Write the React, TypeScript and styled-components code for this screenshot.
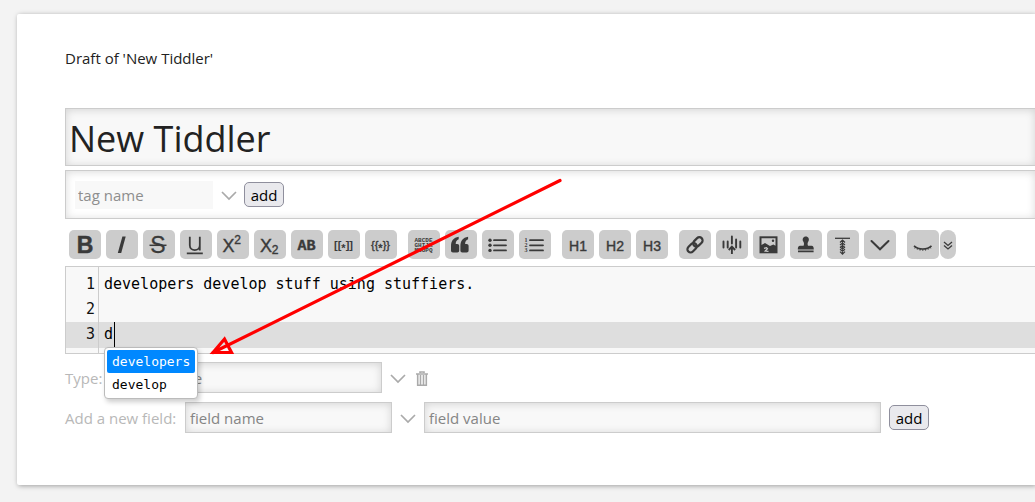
import React from "react";
import styled, { createGlobalStyle } from "styled-components";

const GlobalStyle = createGlobalStyle`
  *, *::before, *::after { box-sizing: border-box; }
  html { height: 100%; }
  body {
    margin: 0;
    min-height: 100%;
    background: #f3f3f3;
    color: #222;
    font: 15px/24px "Open Sans", "Noto Sans", sans-serif;
    overflow-x: hidden;
  }
  button, input, textarea { font: inherit; margin: 0; }
`;

const Page = styled.main`
  padding: 14px 0 16px 17px;
`;

const Card = styled.article`
  position: relative;
  padding: 32px 0 52px 48px;
  background: #fff;
  border-radius: 2px 0 0 2px;
  box-shadow: 1px 1px 5px rgba(0, 0, 0, 0.35);
`;

const DraftTitle = styled.p`
  margin: 0 0 38px;
`;

const insetBox = `
  border: 1px solid #ccc;
  box-shadow: inset 0 1px 8px rgba(0, 0, 0, 0.15);
`;

const TitleInput = styled.input`
  ${insetBox}
  display: block;
  width: 100%;
  height: 58px;
  padding: 2px 4px 0 3px;
  border-right: 0;
  border-radius: 0;
  background: #f8f8f8;
  color: #222;
  font-size: 36px;
  outline: 0;
`;

const TagBox = styled.div`
  ${insetBox}
  display: flex;
  align-items: center;
  height: 49px;
  margin: 4px 0 11px;
  padding-left: 9px;
  border-right: 0;
`;

const TagInput = styled.input`
  width: 138px;
  height: 28px;
  padding: 1px 3px 0;
  border: 0;
  background: #f8f8f8;
  outline: 0;
  &::placeholder { color: #8e8e8e; opacity: 1; }
`;

const FieldInput = styled.input<{ $width: number }>`
  ${insetBox}
  flex: 0 1 ${(p) => p.$width}px;
  min-width: 0;
  height: 31px;
  padding: 0 4px;
  border-radius: 0;
  background: #f8f8f8;
  outline: 0;
  &::placeholder { color: #858585; opacity: 1; }
`;

const AddButton = styled.button`
  width: 40px;
  height: 25px;
  padding: 0;
  border: 1px solid #8f8f9d;
  border-radius: 5px;
  background: #e9e9ed;
  color: #000;
  line-height: 22px;
`;

const IconButton = styled.button<{ $width: number }>`
  display: flex;
  align-items: center;
  justify-content: center;
  width: ${(p) => p.$width}px;
  height: 31px;
  padding: 2px 0 0;
  border: 0;
  background: none;
  color: #aaa;
`;

const Toolbar = styled.div`
  display: flex;
  gap: 11px;
  padding-left: 4px;
`;

const ToolGroup = styled.div<{ $tight?: boolean }>`
  display: flex;
  gap: ${(p) => (p.$tight ? 1 : 5)}px;
`;

const ToolButton = styled.button<{ $narrow?: boolean }>`
  width: ${(p) => (p.$narrow ? 16 : 32)}px;
  height: 29px;
  padding: 0;
  border: 0;
  border-radius: ${(p) => (p.$narrow ? 8 : 5)}px;
  background: #ccc;
  color: #3a3a3a;
  svg { display: block; }
`;

const Editor = styled.div`
  position: relative;
  display: flex;
  margin: 7px 0 8px;
  border: 1px solid #ccc;
  border-right: 0;
  background: linear-gradient(#dedede, #dedede) 0 55px / 100% 26px no-repeat #f8f8f8;
  color: #000;
  font: 15px/25px "DejaVu Sans Mono", monospace;
`;

const Gutter = styled.div`
  width: 33px;
  padding: 5px 3px 5px 0;
  border-right: 1px solid #ccc;
  text-align: right;
  color: #111;
`;

const EditorText = styled.textarea`
  flex: 1;
  height: 86px;
  padding: 5px;
  border: 0;
  background: none;
  color: inherit;
  outline: 0;
  resize: none;
  overflow: hidden;
`;

const Caret = styled.span`
  position: absolute;
  left: 48px;
  top: 55px;
  width: 1px;
  height: 26px;
  background: #000;
`;

const Completions = styled.ul`
  position: absolute;
  z-index: 1;
  left: 38px;
  top: 80px;
  margin: 0;
  padding: 2px;
  list-style: none;
  border: 1px solid #bbb;
  border-radius: 4px;
  background: #fff;
  box-shadow: 2px 3px 5px rgba(0, 0, 0, 0.2);
  font-size: 13px;
  line-height: 23px;
`;

const Completion = styled.li<{ $active?: boolean }>`
  padding: 0 5px;
  border-radius: 2px;
  background: ${(p) => (p.$active ? "#08f" : "transparent")};
  color: ${(p) => (p.$active ? "#fff" : "#000")};
`;

const Fields = styled.div`
  display: grid;
  gap: 9px;
`;

const FieldRow = styled.div`
  display: flex;
  align-items: center;
`;

const FieldLabel = styled.label<{ $width: number }>`
  flex: none;
  width: ${(p) => p.$width}px;
  color: #b8b8b8;
`;

const FieldAction = styled.div`
  padding-left: 8px;
  line-height: 0;
`;

const Pointer = styled.svg`
  position: absolute;
  z-index: 2;
  left: 190px;
  top: 160px;
  pointer-events: none;
`;

const sans = "Liberation Sans, sans-serif";

const Glyph = ({ x, y, size, weight = 400, family = sans, children }: {
  x: number; y: number; size: number; weight?: number; family?: string; children: React.ReactNode;
}) => (
  <text x={x} y={y} fontSize={size} fontWeight={weight} fontFamily={family} textAnchor="middle" fill="currentColor">
    {children}
  </text>
);

const Icon = ({ width = 32, children }: { width?: number; children: React.ReactNode }) => (
  <svg width={width} height={29} viewBox={`0 0 ${width} 29`} fill="none" stroke="none" aria-hidden="true">
    {children}
  </svg>
);

const Bracketed = ({ open, close, weight }: { open: string; close: string; weight: number }) => (
  <Glyph x={15.5} y={19} size={11} weight={weight}>
    {open}<tspan dy="2.5">*</tspan><tspan dy="-2.5">{close}</tspan>
  </Glyph>
);

const Heading = ({ level }: { level: number }) => (
  <g stroke="currentColor" strokeWidth=".4"><Glyph x={16} y={21} size={14}>{`H${level}`}</Glyph></g>
);

const Rows = ({ from }: { from: number }) => (
  <path d={`M${from} 10.2H24M${from} 15.3H24M${from} 20.4H24`} stroke="currentColor" strokeWidth="1.8" strokeLinecap="round" />
);

const groups: { name: string; icon: React.ReactNode }[][] = [
  [
    { name: "Bold", icon: <g stroke="currentColor" strokeWidth=".5"><Glyph x={16} y={23} size={23} weight={700}>B</Glyph></g> },
    { name: "Italic", icon: <path d="M16.4 6.5h3.3L15.2 23h-3.400z" fill="currentColor" /> },
    { name: "Strikethrough", icon: <><g stroke="currentColor" strokeWidth=".3"><Glyph x={15} y={23} size={23}>S</Glyph></g><path d="M6.5 15.3H23.5" stroke="currentColor" strokeWidth="1.5" /></> },
    { name: "Underline", icon: <path d="M9.8 6.8v8.400c0 6.500 10 6.500 10 0V6.800M19.800 15v5.500M6.800 23.300H22.800" stroke="currentColor" strokeWidth="1.8" /> },
    { name: "Superscript", icon: <g stroke="currentColor" strokeWidth=".4"><Glyph x={11.5} y={22} size={18}>X</Glyph><Glyph x={20.5} y={14} size={12}>2</Glyph></g> },
    { name: "Subscript", icon: <g stroke="currentColor" strokeWidth=".4"><Glyph x={12} y={22} size={18}>X</Glyph><Glyph x={21} y={24} size={12}>2</Glyph></g> },
    { name: "Monospaced line", icon: <g stroke="currentColor" strokeWidth=".4"><Glyph x={15.5} y={20} size={15} weight={700} family="Liberation Mono, monospace">AB</Glyph></g> },
    { name: "Link to tiddler", icon: <Bracketed open="[[" close="]]" weight={700} /> },
    { name: "Transclude tiddler", icon: <g stroke="currentColor" strokeWidth=".4"><Bracketed open="{{" close="}}" weight={400} /></g> },
  ],
  [
    { name: "Monospaced block", icon: <>{["ABCDE", "GHIJK", "MNOPQ"].map((row, i) => (
      <Glyph key={row} x={15.5} y={12 + i * 5} size={6} weight={700} family="Liberation Mono, monospace">{row}</Glyph>))}</> },
    { name: "Quote", icon: <path d="M13.700 6.800v2.400c-2 .8-3 2.300-3 4.800h1.500c1.300 0 2 .7 2 2v4.500c0 1.300-.7 2-2 2H8c-1.300 0-2-.7-2-2V16C6 11 8.500 7.500 13.700 6.800zM23.100 6.800v2.400c-2 .8-3 2.300-3 4.800h1.500c1.300 0 2 .7 2 2v4.500c0 1.300-.7 2-2 2h-4.200c-1.300 0-2-.7-2-2V16c0-5 2.500-8.500 7.700-9.200z" fill="currentColor" /> },
    { name: "Bulleted list", icon: <><g fill="currentColor"><circle cx="8" cy="10.2" r="1.7" /><circle cx="8" cy="15.3" r="1.7" /><circle cx="8" cy="20.4" r="1.7" /></g><Rows from={12} /></> },
    { name: "Numbered list", icon: <>{["1", "2", "3"].map((n, i) => <Glyph key={n} x={7} y={12 + i * 5} size={6} weight={700} family="Liberation Serif, serif">{n}</Glyph>)}<Rows from={11} /></> },
  ],
  [1, 2, 3].map((n) => ({ name: `Heading ${n}`, icon: <Heading level={n} /> })),
  [
    { name: "Link", icon: <g stroke="currentColor" strokeWidth="2.2"><rect x="-5.3" y="-3.2" width="10.6" height="6.4" rx="3.2" transform="translate(18.9 11.9) rotate(-45)" /><rect x="-5.3" y="-3.2" width="10.6" height="6.4" rx="3.2" transform="translate(13.1 17.7) rotate(-45)" /></g> },
    { name: "Excise", icon: <><path d="M7.5 11.500v6M11.700 11.500v6M15.900 6.500v7M20.100 9.500v8M24.300 11.500v6" stroke="currentColor" strokeWidth="1.9" strokeLinecap="round" /><path d="M15.9 24v-7M12.700 20l3.200-3.300 3.200 3.300" stroke="currentColor" strokeWidth="1.9" /></> },
    { name: "Picture", icon: <><path d="M6.5 6.300h18v17h-18z" fill="currentColor" /><path d="M8.500 8.300h14v7.500l-2.200-1.400-3.300 1.600-5-3-3.500 2z" fill="#ccc" /><circle cx="20" cy="10.7" r="1.2" fill="currentColor" /><path d="M11 18.300l2.500-.7 1 1.200-2.300 2.200 3.300.3" stroke="#ccc" strokeWidth="1.2" /></> },
    { name: "Stamp", icon: <path d="M13.600 15.800c.7-2 .5-3-.3-4.300-1.500-2.500 0-5.100 2.500-5.100s4 2.600 2.500 5.100c-.8 1.300-1 2.300-.3 4.300h3.600c1.500 0 2.200 1.200 2.200 3.700H7.800c0-2.500.7-3.700 2.200-3.700zM8 20.600h15.600v1.700H8z" fill="currentColor" /> },
    { name: "Editor height", icon: <><path d="M8 8.300h15" stroke="currentColor" strokeWidth="1.3" /><path d="M15.500 10v14M13 12.500l2.500-2.500 2.500 2.500M13 15l2.500-2 2.500 2M13 17.500l2.500-2 2.500 2M13 17l2.500 2 2.500-2M13 19.300l2.500 2 2.500-2M13 21.700l2.500 2.500 2.500-2.500" stroke="currentColor" strokeWidth="1.2" /></> },
    { name: "More", icon: <path d="M7.500 11l8.500 8.300L24.500 11" stroke="currentColor" strokeWidth="2" strokeLinecap="round" /> },
  ],
];

const Chevron = () => (
  <svg width="16" height="10" viewBox="0 0 16 10" fill="none" aria-hidden="true">
    <path d="M1 1l7 7 7-7" stroke="currentColor" strokeWidth="1.7" />
  </svg>
);

const Bin = () => (
  <svg width="12" height="16" viewBox="0 0 12 16" fill="none" aria-hidden="true">
    <path d="M4 2V1h4v1M0 3h12M1.700 3v11.300h8.600V3M4.500 4v10M7.500 4v10" stroke="currentColor" strokeWidth="1.6" />
  </svg>
);

export default function App() {
  return (
    <Page>
      <GlobalStyle />
      <Card>
        <DraftTitle>Draft of 'New Tiddler'</DraftTitle>
        <TitleInput aria-label="Title" defaultValue="New Tiddler" />
        <TagBox>
          <TagInput aria-label="Tag name" placeholder="tag name" />
          <IconButton $width={31} aria-label="Show tags"><Chevron /></IconButton>
          <AddButton>add</AddButton>
        </TagBox>
        <Toolbar role="toolbar" aria-label="Formatting">
          {groups.map((group, i) => (
            <ToolGroup key={i}>
              {group.map((tool) => (
                <ToolButton key={tool.name} aria-label={tool.name}><Icon>{tool.icon}</Icon></ToolButton>
              ))}
            </ToolGroup>
          ))}
          <ToolGroup $tight>
            <ToolButton aria-label="Preview">
              <Icon>
                <path d="M7 15.800c4.500 4.300 13 4.300 17.500 0" stroke="currentColor" strokeWidth="1.6" />
                <path d="M8.500 17l-.8 1.500M10.800 18.200l-.6 1.600M13.300 19l-.3 1.700M15.800 19v2M18.300 19l.3 1.700M20.700 18.200l.6 1.600M23 17l.8 1.500" stroke="currentColor" strokeWidth=".8" />
              </Icon>
            </ToolButton>
            <ToolButton $narrow aria-label="Preview type">
              <Icon width={16}>
                <path d="M4 12l4 3.500 4-3.500M4 15.500l4 3.500 4-3.500" stroke="currentColor" strokeWidth="1.3" />
              </Icon>
            </ToolButton>
          </ToolGroup>
        </Toolbar>
        <Editor>
          <Gutter aria-hidden="true">
            <div>1</div>
            <div>2</div>
            <div>3</div>
          </Gutter>
          <EditorText aria-label="Text" spellCheck={false} defaultValue={"developers develop stuff using stuffiers.\n\nd"} />
          <Caret />
          <Completions role="listbox" aria-label="Completions">
            <Completion role="option" aria-selected $active>developers</Completion>
            <Completion role="option" aria-selected={false}>develop</Completion>
          </Completions>
        </Editor>
        <Fields>
          <FieldRow>
            <FieldLabel $width={44} htmlFor="type">Type:</FieldLabel>
            <FieldInput $width={273} id="type" placeholder="content type" />
            <IconButton $width={32} aria-label="Show types"><Chevron /></IconButton>
            <IconButton $width={16} aria-label="Delete type"><Bin /></IconButton>
          </FieldRow>
          <FieldRow>
            <FieldLabel $width={120} htmlFor="field-name">Add a new field:</FieldLabel>
            <FieldInput $width={207} id="field-name" placeholder="field name" />
            <IconButton $width={32} aria-label="Show fields"><Chevron /></IconButton>
            <FieldInput $width={457} aria-label="Field value" placeholder="field value" />
            <FieldAction><AddButton>add</AddButton></FieldAction>
          </FieldRow>
        </Fields>
        <Pointer width="360" height="190" viewBox="207 174 360 190" fill="none" aria-hidden="true">
          <path d="M560 180.500L213 352.500M213 352.500L224.500 339L231.500 352.500z" stroke="#f00" strokeWidth="3.2" strokeLinecap="round" />
        </Pointer>
      </Card>
    </Page>
  );
}
